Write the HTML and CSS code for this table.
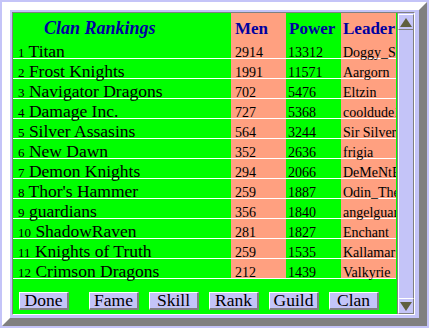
FILE: index.html
```html
<!DOCTYPE html>
<html>
<head>
<meta charset="utf-8">
<title>Clan Rankings</title>
<link rel="stylesheet" href="styles.css">
</head>
<body>
<div class="frame">
  <div class="panel">
    <div class="board">
      <div class="table">
        <div class="row head">
          <div class="cell c1"><span class="title">Clan Rankings</span></div>
          <div class="cell c2">Men</div>
          <div class="cell c3">Power</div>
          <div class="cell c4">Leader</div>
        </div>
        <div class="row"><div class="cell c1"><span class="rank">1</span> Titan</div><div class="cell c2"><span class="num">2914</span></div><div class="cell c3"><span class="num">13312</span></div><div class="cell c4"><span class="num">Doggy_Snoop</span></div></div>
        <div class="row"><div class="cell c1"><span class="rank">2</span> Frost Knights</div><div class="cell c2"><span class="num">1991</span></div><div class="cell c3"><span class="num">11571</span></div><div class="cell c4"><span class="num">Aargorn</span></div></div>
        <div class="row"><div class="cell c1"><span class="rank">3</span> Navigator Dragons</div><div class="cell c2"><span class="num">702</span></div><div class="cell c3"><span class="num">5476</span></div><div class="cell c4"><span class="num">Eltzin</span></div></div>
        <div class="row"><div class="cell c1"><span class="rank">4</span> Damage Inc.</div><div class="cell c2"><span class="num">727</span></div><div class="cell c3"><span class="num">5368</span></div><div class="cell c4"><span class="num">cooldude1</span></div></div>
        <div class="row"><div class="cell c1"><span class="rank">5</span> Silver Assasins</div><div class="cell c2"><span class="num">564</span></div><div class="cell c3"><span class="num">3244</span></div><div class="cell c4"><span class="num">Sir Silver</span></div></div>
        <div class="row"><div class="cell c1"><span class="rank">6</span> New Dawn</div><div class="cell c2"><span class="num">352</span></div><div class="cell c3"><span class="num">2636</span></div><div class="cell c4"><span class="num">frigia</span></div></div>
        <div class="row"><div class="cell c1"><span class="rank">7</span> Demon Knights</div><div class="cell c2"><span class="num">294</span></div><div class="cell c3"><span class="num">2066</span></div><div class="cell c4"><span class="num">DeMeNtEd</span></div></div>
        <div class="row"><div class="cell c1"><span class="rank">8</span> Thor's Hammer</div><div class="cell c2"><span class="num">259</span></div><div class="cell c3"><span class="num">1887</span></div><div class="cell c4"><span class="num">Odin_TheGreat</span></div></div>
        <div class="row"><div class="cell c1"><span class="rank">9</span> guardians</div><div class="cell c2"><span class="num">356</span></div><div class="cell c3"><span class="num">1840</span></div><div class="cell c4"><span class="num">angelguardian</span></div></div>
        <div class="row"><div class="cell c1"><span class="rank">10</span> ShadowRaven</div><div class="cell c2"><span class="num">281</span></div><div class="cell c3"><span class="num">1827</span></div><div class="cell c4"><span class="num">Enchant</span></div></div>
        <div class="row"><div class="cell c1"><span class="rank">11</span> Knights of Truth</div><div class="cell c2"><span class="num">259</span></div><div class="cell c3"><span class="num">1535</span></div><div class="cell c4"><span class="num">Kallamar</span></div></div>
        <div class="row"><div class="cell c1"><span class="rank">12</span> Crimson Dragons</div><div class="cell c2"><span class="num">212</span></div><div class="cell c3"><span class="num">1439</span></div><div class="cell c4"><span class="num">Valkyrie</span></div></div>
      </div>
      <div class="buttons">
        <button class="btn btn-first">Done</button>
        <button class="btn">Fame</button>
        <button class="btn">Skill</button>
        <button class="btn">Rank</button>
        <button class="btn">Guild</button>
        <button class="btn">Clan</button>
      </div>
    </div>
    <div class="scrollbar">
      <div class="sb-btn"><svg width="12" height="9" viewBox="0 0 12 9"><polygon points="6,0 12,9 0,9" fill="#5f5f3f"/></svg></div>
      <div class="sb-thumb"></div>
      <div class="sb-btn"><svg width="12" height="9" viewBox="0 0 12 9"><polygon points="0,0 12,0 6,9" fill="#5f5f3f"/></svg></div>
    </div>
  </div>
</div>
</body>
</html>
```

FILE: styles.css
```css
html, body {
  margin: 0;
}
body {
  width: 429px;
  height: 328px;
  box-sizing: border-box;
  padding: 2px;
  background: #c4c4f8;
  font-family: "Liberation Serif", "Times New Roman", serif;
  overflow: hidden;
}
.frame {
  box-sizing: border-box;
  height: 324px;
  border: 8px solid;
  border-color: #ffffff #808080 #808080 #ffffff;
  padding: 2px 4px 3px 2px;
  background: #c4c4f8;
}
.panel {
  display: flex;
  box-sizing: border-box;
  height: 303px;
  border: 1px solid;
  border-color: #808080 #ffffff #ffffff #808080;
}
.board {
  width: 384px;
  display: flex;
  flex-direction: column;
  background: #00ff00;
}
.table {
  width: 384px;
  background: linear-gradient(to right,
    #00ff00 0 218px,
    #ffa080 218px 273px,
    #00ff00 273px 328px,
    #ffa080 328px 383px,
    #00ff00 383px);
}
.row {
  display: grid;
  grid-template-columns: 218px 55px 55px 55px;
  width: 383px;
  height: 20px;
  box-sizing: border-box;
  border-bottom: 1px solid #ffffff;
}
.row.head {
  height: 26px;
  border-bottom: 0;
}
.cell {
  font-size: 17.5px;
  line-height: 17px;
  padding-top: 4px;
  white-space: nowrap;
  overflow-x: clip;
  color: #000000;
}
.c1 { padding-left: 5px; }
.c2 { padding-left: 4px; }
.c3 { padding-left: 2px; }
.c4 { padding-left: 2px; }
.head .cell {
  font-size: 17px;
  font-weight: bold;
  color: #0000a0;
  padding-top: 7px;
}
.head .c1 { padding-left: 31px; }
.head .c3 { padding-left: 3px; }
.title {
  font-size: 18px;
  font-style: italic;
}
.rank {
  font-size: 13px;
}
.num {
  font-size: 14px;
}
.buttons {
  flex: 1;
  display: flex;
  align-items: flex-start;
  gap: 10px;
  padding: 13px 0 0 6px;
}
.btn {
  width: 50px;
  height: 18px;
  box-sizing: border-box;
  margin: 0;
  padding: 0;
  border-style: solid;
  border-width: 1px 2px 2px 1px;
  border-color: #ffffff #808080 #808080 #ffffff;
  background: #c4c4f8;
  font-family: "Liberation Serif", "Times New Roman", serif;
  font-size: 17.5px;
  line-height: 15px;
  color: #000000;
}
.btn-first {
  margin-right: 10px;
}
.scrollbar {
  width: 16px;
  border-left: 1px solid #808080;
  display: flex;
  flex-direction: column;
  padding-top: 1px;
  background: #c4c4f8;
}
.sb-btn {
  height: 16px;
  box-sizing: border-box;
  border: 1px solid;
  border-color: #ffffff #808080 #808080 #ffffff;
  display: flex;
  align-items: center;
  justify-content: center;
}
.sb-thumb {
  flex: 1;
  box-sizing: border-box;
  border-left: 1px solid #ffffff;
  border-right: 1px solid #808080;
}
```
